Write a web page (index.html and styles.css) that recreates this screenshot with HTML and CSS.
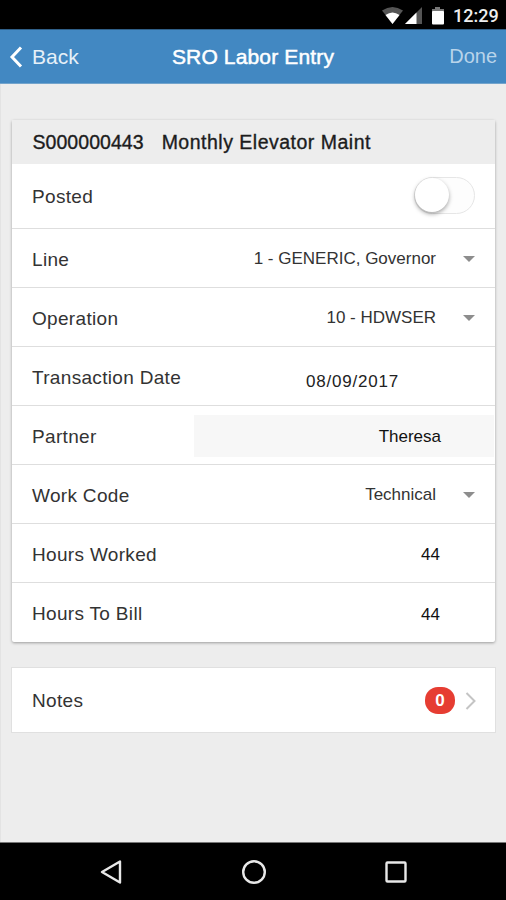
FILE: index.html
```
<!DOCTYPE html>
<html lang="en">
<head>
<meta charset="utf-8">
<title>SRO Labor Entry</title>
<link rel="stylesheet" href="styles.css">
</head>
<body>
<div class="status">
  <svg class="status-icons" width="66" height="20" viewBox="0 0 66 20">
    <path fill="#555" d="M0 3.5Q10.500 -3.500 21 3.500L10.500 17Z"/>
    <path fill="#fff" d="M3.500 8Q10.500 3 17.500 8L10.500 17Z"/>
    <path fill="#555" d="M40 0V17H23Z"/>
    <path fill="#fff" d="M34.500 5.500V17H23Z"/>
    <path fill="#777" d="M53 0h5v2h4v3H50V2h3z"/>
    <rect fill="#fff" x="50" y="4" width="12" height="13.500" rx="1"/>
  </svg>
  <span class="clock">12:29</span>
</div>
<header class="navbar">
  <div class="back"><svg width="14" height="22" viewBox="0 0 14 22"><path d="M12 1.500L3 11L12 20.500" fill="none" stroke="#fff" stroke-width="3"/></svg><span>Back</span></div>
  <h1>SRO Labor Entry</h1>
  <div class="done">Done</div>
</header>
<main>
  <section class="card">
    <div class="card-head"><span class="number">S000000443</span><span class="desc">Monthly Elevator Maint</span></div>
    <div class="row posted"><span class="label">Posted</span><span class="toggle"><span class="knob"></span></span></div>
    <div class="row"><span class="label">Line</span><span class="value">1 - GENERIC, Governor</span><span class="caret"></span></div>
    <div class="row"><span class="label">Operation</span><span class="value">10 - HDWSER</span><span class="caret"></span></div>
    <div class="row"><span class="label">Transaction Date</span><span class="value date">08/09/2017</span></div>
    <div class="row"><span class="label">Partner</span><span class="value field">Theresa</span></div>
    <div class="row"><span class="label">Work Code</span><span class="value">Technical</span><span class="caret"></span></div>
    <div class="row"><span class="label">Hours Worked</span><span class="value number-value">44</span></div>
    <div class="row last"><span class="label">Hours To Bill</span><span class="value number-value">44</span></div>
  </section>
  <section class="notes">
    <span class="label">Notes</span><span class="badge">0</span>
    <svg width="12" height="20" viewBox="0 0 12 20"><path d="M1.500 2L9.500 10L1.500 18" fill="none" stroke="#c4c4c4" stroke-width="2"/></svg>
  </section>
</main>
<footer class="system">
  <svg width="22" height="24" viewBox="0 0 22 24"><path d="M20 1.500V22.500L2 12Z"/></svg>
  <svg width="26" height="26" viewBox="0 0 26 26"><circle cx="13" cy="13" r="10.800"/></svg>
  <svg width="22" height="22" viewBox="0 0 22 22"><rect x="1.500" y="1.500" width="19" height="19" rx="1"/></svg>
</footer>
</body>
</html>
```

FILE: styles.css
```
* { box-sizing: border-box; }
body {
  margin: 0;
  width: 506px;
  height: 900px;
  display: flex;
  flex-direction: column;
  background: #ededed;
  font-family: "Liberation Sans", Arial, sans-serif;
  color: #333;
  overflow: hidden;
}
svg { display: block; flex: none; }
.status {
  height: 29px;
  background: #000;
  display: flex;
  justify-content: flex-end;
  align-items: center;
  padding: 3px 8px 0 0;
}
.status-icons { margin: 2px 5px 0 0; }
.clock {
  width: 45px;
  font: 500 18px/22px Roboto, sans-serif;
  color: #eee;
  white-space: nowrap;
}
.navbar {
  height: 55px;
  background: #4288c2;
  border-top: 1px solid #2f5f88;
  border-bottom: 1px solid #73a4cc;
  display: grid;
  grid-template-columns: 1fr auto 1fr;
  align-items: center;
  padding: 0 9px;
  color: #fff;
}
.back { display: flex; align-items: center; gap: 9px; font-size: 21px; color: #e6f0f8; }
.navbar h1 {
  margin: 0;
  font-size: 21px;
  font-weight: 400;
  letter-spacing: .15px;
  -webkit-text-stroke: .5px #fff;
}
.done { text-align: right; font-size: 20px; color: #b9d4ea; }
main { flex: 1; padding: 36px 11px 0; border-left: 1px solid #e3e3e3; }
.card {
  background: #fff;
  height: 522px;
  border-radius: 2px;
  box-shadow: 0 1px 3px rgba(0, 0, 0, .35);
}
.card-head {
  height: 44px;
  background: #ededed;
  display: flex;
  align-items: center;
  gap: 18px;
  padding: 0 0 0 20.500px;
  color: #1c1c1c;
  font-size: 19.500px;
  -webkit-text-stroke: .35px #1c1c1c;
}
.number { letter-spacing: .05px; }
.desc { letter-spacing: .5px; }
.row {
  height: 59px;
  border-bottom: 1px solid #dedede;
  display: flex;
  align-items: center;
  padding: 2px 20px 0;
}
.row.posted { height: 65px; padding-top: 0; }
.row.last { border-bottom: 0; }
.label { padding-top: 1px; font-size: 19px; letter-spacing: .32px; white-space: nowrap; }
.value { margin-left: auto; margin-right: 27px; font-size: 17px; white-space: nowrap; }
.caret {
  border: 6px solid transparent;
  border-top-color: #8d8d8d;
  border-bottom: 0;
}
.value.date { margin-right: 76px; padding-top: 10px; letter-spacing: .8px; color: #222; }
.value.field {
  width: 300px;
  height: 42px;
  margin-right: -19px;
  padding-right: 53px;
  background: #f7f7f7;
  line-height: 44px;
  text-align: right;
  color: #111;
}
.value.number-value { margin-right: 35px; padding-top: 2px; color: #111; }
.toggle {
  margin-left: auto;
  width: 61px;
  height: 37px;
  border: 1.500px solid #e6e6e6;
  border-radius: 19px;
  margin-top: -2px;
  background: #fdfdfd;
}
.knob {
  display: block;
  width: 34px;
  height: 34px;
  border-radius: 50%;
  background: #fff;
  box-shadow: 0 2px 4px rgba(0, 0, 0, .35);
}
.notes {
  margin-top: 26px;
  height: 64px;
  background: #fff;
  outline: 1px solid #e0e0e0;
  display: flex;
  align-items: center;
  padding: 1px 18px 0 20px;
}
.badge {
  margin-left: auto;
  margin-right: 10px;
  width: 30px;
  height: 27px;
  border-radius: 13px;
  background: #e63d32;
  color: #fff;
  font: bold 17px/27px "Liberation Sans", Arial, sans-serif;
  text-align: center;
}
.system {
  height: 58px;
  background: #000;
  border-top: 1px solid #777;
  display: flex;
  align-items: center;
  justify-content: space-between;
  padding: 0 99px 0 100px;
}
.system svg { fill: none; stroke: #e8e8e8; stroke-width: 2.400; stroke-linejoin: round; }
```
